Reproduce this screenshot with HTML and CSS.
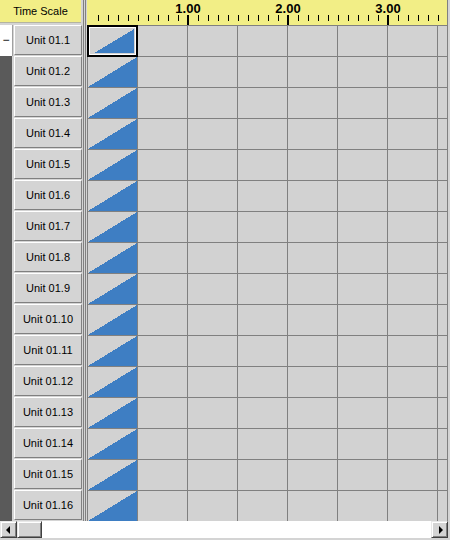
FILE: index.html
```html
<!DOCTYPE html>
<html lang="en">
<head>
  <meta charset="UTF-8">
  <title>Time Scale</title>
  <link rel="stylesheet" href="styles.css">
</head>
<body>

  <div class="frame">
    <div class="view">

      <!-- unit list -->
      <div class="left">
        <div class="corner">Time Scale</div>
        <div class="row open"><span class="mark">−</span><div class="btn">Unit 01.1</div></div>
        <div class="row"><span class="mark"></span><div class="btn">Unit 01.2</div></div>
        <div class="row"><span class="mark"></span><div class="btn">Unit 01.3</div></div>
        <div class="row"><span class="mark"></span><div class="btn">Unit 01.4</div></div>
        <div class="row"><span class="mark"></span><div class="btn">Unit 01.5</div></div>
        <div class="row"><span class="mark"></span><div class="btn">Unit 01.6</div></div>
        <div class="row"><span class="mark"></span><div class="btn">Unit 01.7</div></div>
        <div class="row"><span class="mark"></span><div class="btn">Unit 01.8</div></div>
        <div class="row"><span class="mark"></span><div class="btn">Unit 01.9</div></div>
        <div class="row"><span class="mark"></span><div class="btn">Unit 01.10</div></div>
        <div class="row"><span class="mark"></span><div class="btn">Unit 01.11</div></div>
        <div class="row"><span class="mark"></span><div class="btn">Unit 01.12</div></div>
        <div class="row"><span class="mark"></span><div class="btn">Unit 01.13</div></div>
        <div class="row"><span class="mark"></span><div class="btn">Unit 01.14</div></div>
        <div class="row"><span class="mark"></span><div class="btn">Unit 01.15</div></div>
        <div class="row"><span class="mark"></span><div class="btn">Unit 01.16</div></div>
      </div>

      <div class="split"></div>

      <!-- time grid -->
      <div class="right">
        <div class="ruler">
          <div class="scale"><span>1.00</span><span>2.00</span><span>3.00</span></div>
        </div>
        <div class="grid">
          <div class="line"><div class="cell sel"><i class="bar"></i></div><div class="cell"></div><div class="cell"></div><div class="cell"></div><div class="cell"></div><div class="cell"></div><div class="cell"></div><div class="cell"></div></div>
          <div class="line"><div class="cell"><i class="bar"></i></div><div class="cell"></div><div class="cell"></div><div class="cell"></div><div class="cell"></div><div class="cell"></div><div class="cell"></div><div class="cell"></div></div>
          <div class="line"><div class="cell"><i class="bar"></i></div><div class="cell"></div><div class="cell"></div><div class="cell"></div><div class="cell"></div><div class="cell"></div><div class="cell"></div><div class="cell"></div></div>
          <div class="line"><div class="cell"><i class="bar"></i></div><div class="cell"></div><div class="cell"></div><div class="cell"></div><div class="cell"></div><div class="cell"></div><div class="cell"></div><div class="cell"></div></div>
          <div class="line"><div class="cell"><i class="bar"></i></div><div class="cell"></div><div class="cell"></div><div class="cell"></div><div class="cell"></div><div class="cell"></div><div class="cell"></div><div class="cell"></div></div>
          <div class="line"><div class="cell"><i class="bar"></i></div><div class="cell"></div><div class="cell"></div><div class="cell"></div><div class="cell"></div><div class="cell"></div><div class="cell"></div><div class="cell"></div></div>
          <div class="line"><div class="cell"><i class="bar"></i></div><div class="cell"></div><div class="cell"></div><div class="cell"></div><div class="cell"></div><div class="cell"></div><div class="cell"></div><div class="cell"></div></div>
          <div class="line"><div class="cell"><i class="bar"></i></div><div class="cell"></div><div class="cell"></div><div class="cell"></div><div class="cell"></div><div class="cell"></div><div class="cell"></div><div class="cell"></div></div>
          <div class="line"><div class="cell"><i class="bar"></i></div><div class="cell"></div><div class="cell"></div><div class="cell"></div><div class="cell"></div><div class="cell"></div><div class="cell"></div><div class="cell"></div></div>
          <div class="line"><div class="cell"><i class="bar"></i></div><div class="cell"></div><div class="cell"></div><div class="cell"></div><div class="cell"></div><div class="cell"></div><div class="cell"></div><div class="cell"></div></div>
          <div class="line"><div class="cell"><i class="bar"></i></div><div class="cell"></div><div class="cell"></div><div class="cell"></div><div class="cell"></div><div class="cell"></div><div class="cell"></div><div class="cell"></div></div>
          <div class="line"><div class="cell"><i class="bar"></i></div><div class="cell"></div><div class="cell"></div><div class="cell"></div><div class="cell"></div><div class="cell"></div><div class="cell"></div><div class="cell"></div></div>
          <div class="line"><div class="cell"><i class="bar"></i></div><div class="cell"></div><div class="cell"></div><div class="cell"></div><div class="cell"></div><div class="cell"></div><div class="cell"></div><div class="cell"></div></div>
          <div class="line"><div class="cell"><i class="bar"></i></div><div class="cell"></div><div class="cell"></div><div class="cell"></div><div class="cell"></div><div class="cell"></div><div class="cell"></div><div class="cell"></div></div>
          <div class="line"><div class="cell"><i class="bar"></i></div><div class="cell"></div><div class="cell"></div><div class="cell"></div><div class="cell"></div><div class="cell"></div><div class="cell"></div><div class="cell"></div></div>
          <div class="line"><div class="cell"><i class="bar"></i></div><div class="cell"></div><div class="cell"></div><div class="cell"></div><div class="cell"></div><div class="cell"></div><div class="cell"></div><div class="cell"></div></div>
        </div>
      </div>

    </div>

    <!-- horizontal scrollbar -->
    <div class="hscroll">
      <div class="sbtn"><span class="arrow-left"></span></div>
      <div class="thumb"></div>
      <div class="track"></div>
      <div class="sbtn"><span class="arrow-right"></span></div>
    </div>
  </div>

</body>
</html>
```

FILE: styles.css
```css
body {
  margin: 0;
  background: #d4d4d4;
  font-family: "Liberation Sans", Arial, sans-serif;
  font-size: 11px;
  color: #000;
}
.frame {
  width: 448px;
  height: 538px;
  display: flex;
  flex-direction: column;
}
.view {
  display: flex;
  height: 521px;
}

/* left side: unit buttons */
.left {
  width: 82px;
  flex: none;
}
.corner {
  width: 81px;
  height: 22px;
  line-height: 22px;
  text-align: center;
  background: #f2ee86;
  border-bottom: 1px solid #b4b4a0;
  margin-bottom: 2px;
}
.row {
  display: flex;
  height: 31px;
}
.mark {
  width: 12px;
  flex: none;
  background: #5a5a5a;
}
.row.open .mark {
  background: #fff;
  box-shadow: 1px 0 0 #a0a0a0;
  text-align: center;
  line-height: 30px;
  font-size: 12px;
}
.btn {
  width: 68px;
  height: 30px;
  margin-left: 2px;
  box-sizing: border-box;
  border: 1px solid;
  border-color: #fff #808080 #808080 #fff;
  background: #d4d4d4;
  display: flex;
  align-items: center;
  justify-content: center;
}
.split {
  width: 1px;
  margin: 0 1px;
  border-left: 1px solid #808080;
  border-right: 1px solid #808080;
  flex: none;
}

/* right side: ruler and cells */
.right {
  width: 360px;
  border-right: 1px solid #808080;
  overflow: hidden;
  flex: none;
}
.ruler {
  height: 25px;
  background: #f2ee86;
}
.scale {
  margin-left: 11px;
  height: 25px;
  padding-left: 40px;
  display: flex;
  overflow: hidden;
  background-image:
    linear-gradient(to right, #000 1px, transparent 1px),
    linear-gradient(to right, #000 2px, transparent 2px);
  background-size: 10px 6px, 100px 10px;
  background-position: 0 15px, 89px 15px;
  background-repeat: repeat-x;
}
.scale span {
  width: 100px;
  flex: none;
  text-align: center;
  font-size: 13px;
  font-weight: bold;
  line-height: 14px;
  padding-top: 2px;
}
.line {
  display: flex;
}
.cell {
  width: 49px;
  height: 30px;
  flex: none;
  border-left: 1px solid #808080;
  border-top: 1px solid #808080;
  background: #d2d2d2;
}
.bar {
  display: block;
  height: 100%;
  background: linear-gradient(to top left, #3e7ec3 50%, transparent 50%);
}
.cell.sel {
  position: relative;
}
.cell.sel::after {
  content: "";
  position: absolute;
  top: -1px;
  left: -1px;
  right: -1px;
  bottom: -1px;
  border: 2px solid #000;
  box-shadow: inset 0 0 0 1px #fff;
  z-index: 1;
}
.sel .bar {
  height: 24px;
  margin: 3px 3px 3px 6px;
}

/* scrollbar */
.hscroll {
  display: flex;
  height: 17px;
  background: #fff;
}
.sbtn, .thumb {
  width: 17px;
  height: 17px;
  box-sizing: border-box;
  flex: none;
  background: #d4d4d4;
  border: 1px solid;
  border-color: #e8e8e8 #404040 #404040 #e8e8e8;
  box-shadow: inset 1px 1px 0 #fff, inset -1px -1px 0 #808080;
  display: flex;
  align-items: center;
  justify-content: center;
}
.thumb {
  width: 25px;
}
.track {
  flex: 1;
}
.arrow-left {
  border-right: 4px solid #000;
  border-top: 4px solid transparent;
  border-bottom: 4px solid transparent;
  margin-right: 2px;
}
.arrow-right {
  border-left: 4px solid #000;
  border-top: 4px solid transparent;
  border-bottom: 4px solid transparent;
  margin-left: 2px;
}
```
